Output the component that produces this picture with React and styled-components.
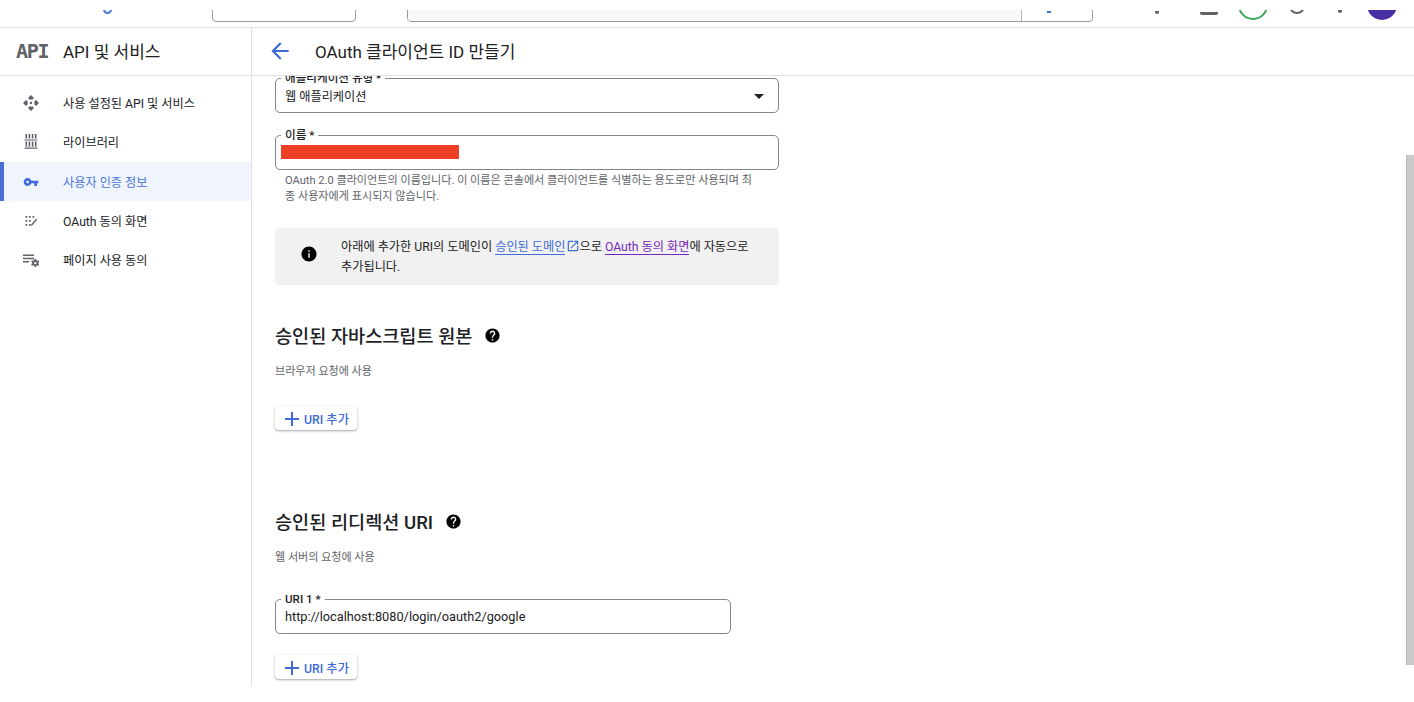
import styled, { createGlobalStyle } from "styled-components"
import { MdAdd, MdArrowBack, MdArrowDropDown, MdHelp, MdInfo, MdOpenInNew, MdVpnKey } from "react-icons/md"

const GlobalStyle = createGlobalStyle`
  html, body {
    margin: 0;
    padding: 0;
    background: #fff;
    overflow: hidden;
  }
  * {
    box-sizing: border-box;
  }
  body {
    font-family: Roboto, "Noto Sans CJK KR", sans-serif;
    color: #202124;
  }
`

const Page = styled.div`
  position: relative;
  width: 1414px;
  height: 702px;
  overflow: hidden;
`

const TopBar = styled.header`
  height: 28px;
  padding-top: 10px;
  border-bottom: 1px solid #dfdfdf;
`

const TopRow = styled.div`
  height: 12px;
  padding-left: 103px;
  display: flex;
  align-items: flex-end;
  overflow: hidden;
`

const Ring = styled.span`
  flex: none;
  width: ${p => p.$size}px;
  height: ${p => p.$size}px;
  margin-left: ${p => p.$left}px;
  margin-bottom: ${p => p.$lift}px;
  border-radius: 50%;
  border: 2px solid ${p => p.$color};
  background: ${p => p.$fill || "transparent"};
`

const ProjectBox = styled.div`
  flex: none;
  width: 144px;
  height: 30px;
  margin-left: 100px;
  border: 1px solid #9a9a9a;
  border-radius: 4px;
`

const SearchBox = styled.div`
  flex: none;
  width: 686px;
  height: 30px;
  margin-left: 51px;
  border: 1px solid #9a9a9a;
  border-radius: 4px;
  display: flex;
  overflow: hidden;
`

const SearchInput = styled.div`
  width: 614px;
  background: #f8f8f8;
  border-right: 1px solid #b5b5b5;
`

const SearchDot = styled.span`
  width: 4px;
  height: 2px;
  margin: 18px 0 0 25px;
  background: #4a74d8;
`

const Stub = styled.span`
  flex: none;
  width: ${p => p.$width}px;
  height: 3px;
  margin-left: ${p => p.$left}px;
  margin-bottom: ${p => p.$lift}px;
  background: #5f6368;
  border-radius: 0 0 2px 2px;
`

const Body = styled.div`
  height: 658px;
  display: flex;
`

const Sidebar = styled.aside`
  flex: none;
  width: 252px;
  border-right: 1px solid #e0e0e0;
`

const SideHead = styled.div`
  height: 48px;
  padding: 0 0 2px 16px;
  display: flex;
  align-items: center;
  border-bottom: 1px solid #e0e0e0;
`

const ApiMark = styled.span`
  width: 47px;
  font-family: "DejaVu Sans Mono", "Liberation Mono", monospace;
  font-size: 20px;
  font-weight: 700;
  letter-spacing: -1.3px;
  color: #5f6368;
`

const SideTitle = styled.h1`
  margin: 0;
  font-size: 17px;
  font-weight: 400;
`

const Nav = styled.nav`
  padding-top: 7.5px;
  display: flex;
  flex-direction: column;
`

const NavItem = styled.a`
  height: 39.25px;
  padding-left: ${p => (p.$active ? "19px" : "23px")};
  display: flex;
  align-items: center;
  gap: 24px;
  font-size: 12.2px;
  color: ${p => (p.$active ? "#4a74d8" : "#202124")};
  background: ${p => (p.$active ? "#eff4fd" : "transparent")};
  border-left: ${p => (p.$active ? "4px solid #4a6fd6" : "none")};
`

const NavIcon = styled.svg`
  flex: none;
  width: 16px;
  height: 16px;
  fill: currentColor;
  color: #5f6368;
`

const Main = styled.main`
  flex: 1;
  min-width: 0;
  display: flex;
  flex-direction: column;
`

const PageHead = styled.div`
  flex: none;
  height: 48px;
  padding: 0 0 2px 15px;
  display: flex;
  align-items: center;
  gap: 22px;
  border-bottom: 1px solid #e0e0e0;
`

const BackIcon = styled(MdArrowBack)`
  flex: none;
  width: 26px;
  height: 26px;
  color: #3f6ad8;
`

const PageTitle = styled.h2`
  margin: 0;
  font-size: 17px;
  font-weight: 400;
`

const Content = styled.div`
  flex: 1;
  min-height: 0;
  padding: 0 0 0 23px;
  overflow: hidden;
`

const Field = styled.div`
  position: relative;
  width: ${p => p.$width}px;
  height: 35px;
  margin-top: ${p => p.$top}px;
  padding: 0 9px;
  display: flex;
  align-items: center;
  justify-content: space-between;
  border: 1px solid #80868b;
  border-radius: 5px;
`

const FieldLabel = styled.label`
  position: absolute;
  left: 5px;
  top: -8px;
  padding: 0 4px;
  background: #fff;
  font-size: 11.6px;
  font-weight: 500;
  line-height: 14px;
  color: #202124;
`

const FieldValue = styled.span`
  font-size: ${p => p.$size}px;
`

const Redaction = styled.span`
  width: 178px;
  height: 14px;
  margin: 0 0 2px -4px;
  background: #ec3f25;
`

const Caret = styled(MdArrowDropDown)`
  width: 24px;
  height: 24px;
  margin-right: -2px;
  color: #202124;
`

const HelpText = styled.p`
  width: 473px;
  margin: 3px 0 0 10px;
  font-size: 11.1px;
  line-height: 16px;
  color: #5f6368;
  word-break: break-all;
`

const Notice = styled.div`
  width: 504px;
  height: 57px;
  margin-top: 23px;
  padding: 9px 24px 0 25px;
  display: flex;
  gap: 23px;
  background: #f1f1f1;
  border-radius: 4px;
  font-size: 12.2px;
  line-height: 20px;
`

const NoticeIcon = styled(MdInfo)`
  flex: none;
  width: 18px;
  height: 18px;
  margin-top: 8px;
  color: #000;
`

const NoticeText = styled.div`
  width: 420px;
`

const Link = styled.a`
  color: ${p => (p.$visited ? "#7627bb" : "#3f6ad8")};
  border-bottom: 1px solid currentColor;
`

const ExternalIcon = styled(MdOpenInNew)`
  width: 14px;
  height: 14px;
  margin: 0 -1px -2px 1px;
  color: #3f6ad8;
`

const SectionTitle = styled.h3`
  height: 28px;
  margin: ${p => p.$top}px 0 0;
  display: flex;
  align-items: center;
  gap: 12px;
  font-size: 18.6px;
  font-weight: 500;
`

const HelpIcon = styled(MdHelp)`
  width: 17px;
  height: 17px;
  margin-top: 2px;
  color: #000;
`

const SectionNote = styled.p`
  height: 16px;
  margin: 16px 0 0;
  font-size: 11.05px;
  line-height: 16px;
  color: #5f6368;
`

const AddButton = styled.button`
  height: 24px;
  width: 82px;
  margin-top: ${p => p.$top}px;
  padding: 1px 0 0 5px;
  display: flex;
  align-items: center;
  border: none;
  border-radius: 4px;
  background: #fff;
  box-shadow: 0 1px 3px rgba(60, 64, 67, 0.35), 0 1px 1px rgba(60, 64, 67, 0.15);
  font-family: inherit;
  font-size: 12.3px;
  font-weight: 500;
  color: #3f6ad8;
`

const PlusIcon = styled(MdAdd)`
  width: 24px;
  height: 24px;
`

const Scrollbar = styled.div`
  position: absolute;
  top: 155px;
  right: 0;
  width: 8px;
  height: 510px;
  background: #c9c9c9;
  border-left: 1px solid #b9b9b9;
`

const MoveIcon = () => (
  <NavIcon viewBox="0 0 16 16">
    <path d="M8 0 11 3 9.6 4.6H6.4L5 3zM8 16 5 13 6.4 11.4H9.6L11 13zM0 8 3 5 4.6 6.4V9.6L3 11zM16 8 13 11 11.4 9.6V6.4L13 5z" />
    <circle cx="8" cy="8" r="1.2" />
  </NavIcon>
)

const LibraryIcon = () => (
  <NavIcon viewBox="0 0 16 16">
    <path d="M2.5 0h1.6v4.6H2.5zM5.6 0h1.6v4.6H5.6zM8.8 0h1.6v4.6H8.8zM11.9 0h1.6v4.6h-1.6zM1.5 5.4h13v1.1h-13zM2.5 7.4h1.6v5.4H2.5zM5.6 7.4h1.6v5.4H5.6zM8.8 7.4h1.6v5.4H8.8zM11.9 7.4h1.6v5.4h-1.6zM1.5 13.4h13v1.4h-13z" />
  </NavIcon>
)

const ConsentIcon = () => (
  <NavIcon viewBox="0 0 16 16">
    <path d="M2.5 3h1.8v1.8H2.5zM6 3h1.8v1.8H6zM9.5 3h1.8v1.8H9.5zM2.5 7h1.8v1.8H2.5zM6 7h1.8v1.8H6zM2.5 11h1.8v1.8H2.5zM6 11h1.8v1.8H6z" />
    <path d="M13.2 5.5 14.2 6.5 9.2 12.6H8.1v-1.2z" />
  </NavIcon>
)

const PageUsageIcon = () => (
  <NavIcon viewBox="0 0 16 16">
    <path d="M0 2.5h11v1.4H0zM0 5.8h11v1.4H0zM0 9.1h6v1.4H0z" />
    <path d="M11.5 7h1.6l.3 1.3 1 .5 1.2-.5.8 1.4-1 .8v1.1l1 .8-.8 1.4-1.2-.5-1 .5-.3 1.3h-1.6l-.3-1.3-1-.5-1.2.5-.8-1.4 1-.8V10.5l-1-.8.8-1.4 1.2.5 1-.5zM12.3 9.9a1.2 1.2 0 1 0 0 2.4 1.2 1.2 0 0 0 0-2.4z" />
  </NavIcon>
)

const KeyIcon = styled(MdVpnKey)`
  flex: none;
  width: 16px;
  height: 16px;
  color: #3f6ad8;
`

const App = () => {
  return (
    <Page>
      <GlobalStyle />
      <TopBar>
        <TopRow>
          <Ring $size={9} $left={0} $lift={8} $color="#4a74d8" />
          <ProjectBox />
          <SearchBox>
            <SearchInput />
            <SearchDot />
          </SearchBox>
          <Stub $width={4} $left={62} $lift={8} />
          <Stub $width={18} $left={41} $lift={7} />
          <Ring $size={30} $left={20} $lift={2} $color="#3fa35c" />
          <Ring $size={16} $left={21} $lift={8} $color="#5f6368" />
          <Stub $width={4} $left={33} $lift={9} />
          <Ring $size={30} $left={25} $lift={2} $color="#4a2ea3" $fill="#4a2ea3" />
        </TopRow>
      </TopBar>
      <Body>
        <Sidebar>
          <SideHead>
            <ApiMark>API</ApiMark>
            <SideTitle>API 및 서비스</SideTitle>
          </SideHead>
          <Nav>
            <NavItem><MoveIcon />사용 설정된 API 및 서비스</NavItem>
            <NavItem><LibraryIcon />라이브러리</NavItem>
            <NavItem $active><KeyIcon />사용자 인증 정보</NavItem>
            <NavItem><ConsentIcon />OAuth 동의 화면</NavItem>
            <NavItem><PageUsageIcon />페이지 사용 동의</NavItem>
          </Nav>
        </Sidebar>
        <Main>
          <PageHead>
            <BackIcon />
            <PageTitle>OAuth 클라이언트 ID 만들기</PageTitle>
          </PageHead>
          <Content>
            <Field $width={504} $top={2}>
              <FieldLabel>애플리케이션 유형 *</FieldLabel>
              <FieldValue $size={12.2}>웹 애플리케이션</FieldValue>
              <Caret />
            </Field>
            <Field $width={504} $top={22}>
              <FieldLabel>이름 *</FieldLabel>
              <Redaction />
            </Field>
            <HelpText>
              OAuth 2.0 클라이언트의 이름입니다. 이 이름은 콘솔에서 클라이언트를 식별하는 용도로만 사용되며 최종 사용자에게 표시되지 않습니다.
            </HelpText>
            <Notice>
              <NoticeIcon />
              <NoticeText>
                아래에 추가한 URI의 도메인이 <Link>승인된 도메인</Link><ExternalIcon />으로 <Link $visited>OAuth 동의 화면</Link>에 자동으로 추가됩니다.
              </NoticeText>
            </Notice>
            <SectionTitle $top={35}>승인된 자바스크립트 원본 <HelpIcon /></SectionTitle>
            <SectionNote>브라우저 요청에 사용</SectionNote>
            <AddButton $top={26}><PlusIcon />URI 추가</AddButton>
            <SectionTitle $top={76}>승인된 리디렉션 URI <HelpIcon /></SectionTitle>
            <SectionNote>웹 서버의 요청에 사용</SectionNote>
            <Field $width={456} $top={33}>
              <FieldLabel>URI 1 *</FieldLabel>
              <FieldValue $size={12.75}>http://localhost:8080/login/oauth2/google</FieldValue>
            </Field>
            <AddButton $top={21}><PlusIcon />URI 추가</AddButton>
          </Content>
        </Main>
      </Body>
      <Scrollbar />
    </Page>
  )
}

export default App
